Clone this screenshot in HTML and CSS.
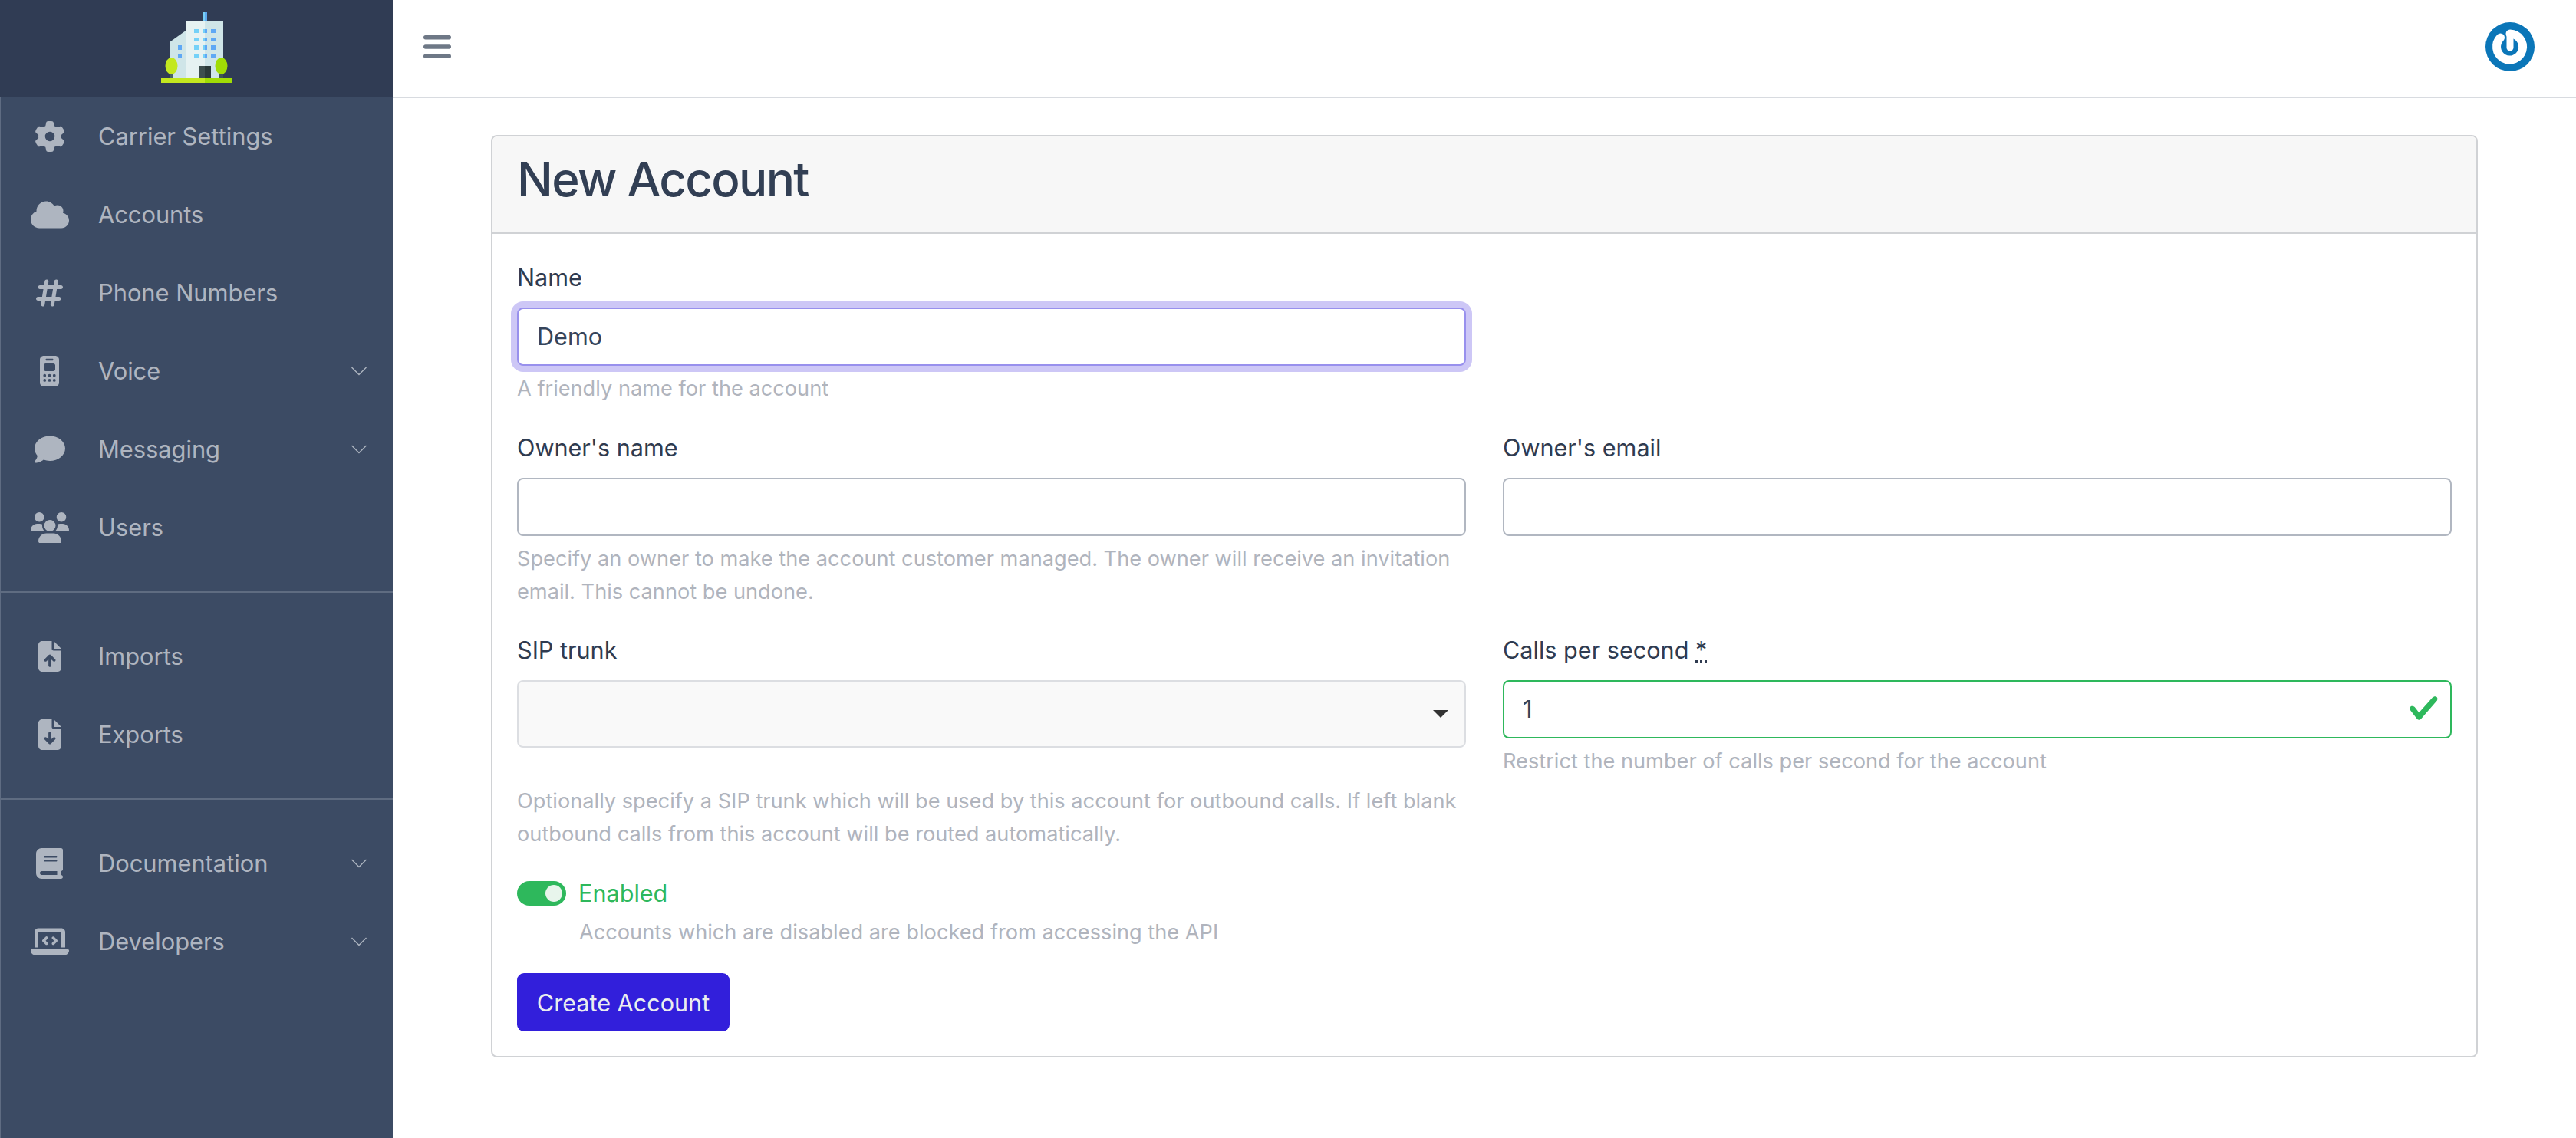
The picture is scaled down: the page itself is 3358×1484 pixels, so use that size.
FILE: index.html
```html
<!DOCTYPE html>
<html lang="en">
<head>
<meta charset="utf-8">
<title>New Account</title>
<link rel="stylesheet" href="styles.css">
</head>
<body>
<div class="app">
  <aside class="sidebar">
    <div class="brand">
      <svg class="logo" width="92" height="92" viewBox="210 16 92 92">
        <rect x="264" y="16" width="3" height="12" fill="#78d0f5"/>
        <rect x="267" y="16" width="3" height="12" fill="#5ea8ee"/>
        <polygon points="221,55 242,40 242,102 221,102" fill="#cfe5e8"/>
        <rect x="242" y="27" width="25" height="75" fill="#e6f2f2"/>
        <rect x="267" y="27" width="24" height="75" fill="#cfe5e8"/>
        <g fill="#74d1f8">
          <rect x="253" y="38" width="6" height="5"/><rect x="253" y="49" width="6" height="5"/><rect x="253" y="59" width="6" height="6"/><rect x="253" y="70" width="6" height="5"/>
          <rect x="264" y="38" width="3" height="5"/><rect x="264" y="49" width="3" height="5"/><rect x="264" y="59" width="3" height="6"/><rect x="264" y="70" width="3" height="5"/>
        </g>
        <g fill="#5fa8f5">
          <rect x="267" y="38" width="3" height="5"/><rect x="267" y="49" width="3" height="5"/><rect x="267" y="59" width="3" height="6"/><rect x="267" y="70" width="3" height="5"/>
          <rect x="275" y="38" width="6" height="5"/><rect x="275" y="49" width="6" height="5"/><rect x="275" y="59" width="6" height="6"/><rect x="275" y="70" width="6" height="5"/>
          <rect x="232" y="59" width="5" height="6"/><rect x="232" y="70" width="5" height="5"/>
        </g>
        <rect x="259" y="86" width="8" height="16" fill="#3d4e4e"/>
        <rect x="267" y="86" width="8" height="16" fill="#2b3a3a"/>
        <rect x="221" y="94" width="5" height="8" fill="#4c6468"/>
        <rect x="286" y="94" width="5" height="8" fill="#3d5256"/>
        <ellipse cx="223.5" cy="86" rx="8" ry="11" fill="#c3e81f"/>
        <ellipse cx="288.5" cy="86" rx="8" ry="11" fill="#a0dc05"/>
        <rect x="210" y="102" width="57" height="6" fill="#c3e81f"/>
        <rect x="267" y="102" width="35" height="6" fill="#a0dc05"/>
      </svg>
    </div>
    <nav class="nav">
      <ul class="nav-group">
        <li class="nav-item">
          <span class="nav-icon"><svg viewBox="0 0 512 512" class="ic"><path d="M495.9 166.6c3.2 8.700 .5 18.400-6.400 24.600l-43.300 39.400c1.100 8.300 1.700 16.800 1.700 25.400s-.6 17.100-1.700 25.400l43.300 39.400c6.900 6.200 9.600 15.900 6.400 24.600c-4.400 11.900-9.700 23.300-15.800 34.300l-4.700 8.100c-6.600 11-14 21.400-22.100 31.200c-5.900 7.200-15.700 9.600-24.500 6.800l-55.700-17.700c-13.400 10.300-28.200 18.900-44 25.400l-12.500 57.100c-2 9.100-9 16.300-18.200 17.800c-13.800 2.300-28 3.500-42.500 3.500s-28.700-1.200-42.500-3.500c-9.200-1.500-16.200-8.700-18.200-17.800l-12.500-57.100c-15.800-6.500-30.600-15.100-44-25.400L83.100 425.900c-8.800 2.800-18.600 .3-24.500-6.800c-8.100-9.800-15.500-20.200-22.100-31.200l-4.700-8.100c-6.100-11-11.400-22.400-15.800-34.300c-3.200-8.700-.5-18.400 6.400-24.600l43.300-39.400C64.600 273.100 64 264.600 64 256s.6-17.100 1.700-25.400L22.400 191.200c-6.900-6.200-9.600-15.900-6.400-24.600c4.400-11.900 9.700-23.300 15.800-34.300l4.700-8.100c6.600-11 14-21.400 22.100-31.200c5.900-7.200 15.700-9.600 24.500-6.800l55.700 17.700c13.400-10.300 28.200-18.900 44-25.400l12.500-57.100c2-9.100 9-16.300 18.200-17.800C227.300 1.200 241.500 0 256 0s28.700 1.200 42.500 3.500c9.200 1.500 16.200 8.700 18.200 17.800l12.500 57.100c15.800 6.500 30.600 15.100 44 25.400l55.700-17.700c8.800-2.800 18.600-.3 24.500 6.800c8.100 9.800 15.500 20.200 22.100 31.200l4.700 8.100c6.100 11 11.400 22.400 15.800 34.300zM256 336a80 80 0 1 0 0-160 80 80 0 1 0 0 160z"/></svg></span>
          <span class="nav-label">Carrier Settings</span>
        </li>
        <li class="nav-item">
          <span class="nav-icon"><svg viewBox="0 0 640 512" class="ic"><path d="M0 336c0 79.500 64.500 144 144 144H512c70.700 0 128-57.300 128-128c0-61.900-44-113.600-102.400-125.400c4.100-10.700 6.400-22.400 6.400-34.600c0-53-43-96-96-96c-19.700 0-38.100 6-53.300 16.200C367 64.200 315.300 32 256 32C167.600 32 96 103.600 96 192c0 2.700 .1 5.400 .2 8.100C40.200 219.800 0 273.200 0 336z"/></svg></span>
          <span class="nav-label">Accounts</span>
        </li>
        <li class="nav-item">
          <span class="nav-icon"><svg viewBox="0 0 448 512" class="ic"><path d="M181.300 32.400c17.400 2.900 29.200 19.400 26.300 36.800L197.800 128h95.100l11.500-69.300c2.900-17.400 19.400-29.200 36.800-26.300s29.200 19.400 26.300 36.800L357.800 128H416c17.700 0 32 14.300 32 32s-14.300 32-32 32H347.100L325.800 320H384c17.700 0 32 14.300 32 32s-14.300 32-32 32H315.100l-11.500 69.300c-2.900 17.400-19.400 29.200-36.800 26.300s-29.200-19.400-26.300-36.800l9.800-58.700H155.100l-11.500 69.300c-2.900 17.400-19.400 29.200-36.800 26.300s-29.200-19.400-26.300-36.800L90.200 384H32c-17.700 0-32-14.300-32-32s14.300-32 32-32h68.900l21.300-128H64c-17.700 0-32-14.300-32-32s14.300-32 32-32h68.900l11.500-69.300c2.900-17.400 19.400-29.200 36.800-26.300zM187.100 192L165.800 320h95.100l21.300-128H187.100z"/></svg></span>
          <span class="nav-label">Phone Numbers</span>
        </li>
        <li class="nav-item">
          <span class="nav-icon"><svg viewBox="0 0 320 512" class="ic"><path d="M0 64C0 28.700 28.700 0 64 0H256c35.300 0 64 28.700 64 64V448c0 35.300-28.700 64-64 64H64c-35.300 0-64-28.700-64-64V64zm64 96v64c0 17.700 14.300 32 32 32H224c17.700 0 32-14.300 32-32V160c0-17.700-14.300-32-32-32H96c-17.700 0-32 14.300-32 32zM80 352a24 24 0 1 0 0-48 24 24 0 1 0 0 48zm24 56a24 24 0 1 0 -48 0 24 24 0 1 0 48 0zm56-56a24 24 0 1 0 0-48 24 24 0 1 0 0 48zm24 56a24 24 0 1 0 -48 0 24 24 0 1 0 48 0zm56-56a24 24 0 1 0 0-48 24 24 0 1 0 0 48zm24 56a24 24 0 1 0 -48 0 24 24 0 1 0 48 0zM112 48c-8.800 0-16 7.200-16 16s7.200 16 16 16h96c8.800 0 16-7.200 16-16s-7.200-16-16-16H112z"/></svg></span>
          <span class="nav-label">Voice</span>
          <svg class="chev" viewBox="0 0 20 12"><path d="M0.5 1l9.500 9.500L19.500 1"/></svg>
        </li>
        <li class="nav-item">
          <span class="nav-icon"><svg viewBox="0 0 512 512" class="ic"><path d="M512 240c0 114.900-114.600 208-256 208c-37.100 0-72.300-6.400-104.100-17.900c-11.900 8.700-31.300 20.600-54.300 30.600C73.600 471.100 44.700 480 16 480c-6.500 0-12.300-3.900-14.800-9.900c-2.500-6-1.100-12.800 3.400-17.400l.3-.3c.3-.3 .7-.7 1.300-1.400c1.100-1.200 2.800-3.100 4.900-5.700c4.100-5 9.600-12.400 15.200-21.600c10-16.600 19.500-38.400 21.400-62.900C17.700 326.800 0 285.100 0 240C0 125.100 114.600 32 256 32s256 93.100 256 208z"/></svg></span>
          <span class="nav-label">Messaging</span>
          <svg class="chev" viewBox="0 0 20 12"><path d="M0.5 1l9.500 9.500L19.500 1"/></svg>
        </li>
        <li class="nav-item">
          <span class="nav-icon"><svg viewBox="0 0 640 512" class="ic"><path d="M144 0a80 80 0 1 1 0 160A80 80 0 1 1 144 0zM512 0a80 80 0 1 1 0 160A80 80 0 1 1 512 0zM0 298.700C0 239.800 47.800 192 106.700 192h42.700c15.900 0 31 3.500 44.600 9.700c-1.300 7.200-1.900 14.700-1.900 22.300c0 38.200 16.800 72.500 43.300 96c-.2 0-.4 0-.7 0H21.300C9.600 320 0 310.400 0 298.700zM405.300 320c-.2 0-.4 0-.7 0c26.600-23.500 43.300-57.800 43.300-96c0-7.600-.7-15-1.900-22.300c13.600-6.300 28.700-9.700 44.600-9.700h42.700C592.200 192 640 239.800 640 298.700c0 11.800-9.600 21.300-21.300 21.300H405.300zM224 224a96 96 0 1 1 192 0 96 96 0 1 1 -192 0zM128 485.300C128 411.700 187.700 352 261.300 352H378.700C452.300 352 512 411.700 512 485.300c0 14.700-11.900 26.700-26.700 26.700H154.700c-14.700 0-26.700-11.900-26.700-26.700z"/></svg></span>
          <span class="nav-label">Users</span>
        </li>
      </ul>
      <ul class="nav-group">
        <li class="nav-item">
          <span class="nav-icon"><svg viewBox="0 0 384 512" class="ic"><path d="M64 0C28.700 0 0 28.700 0 64V448c0 35.300 28.700 64 64 64H320c35.300 0 64-28.700 64-64V160H256c-17.700 0-32-14.300-32-32V0H64zM256 0V128H384L256 0zM216 408c0 13.300-10.700 24-24 24s-24-10.700-24-24V305.900l-31 31c-9.400 9.400-24.600 9.400-33.900 0s-9.400-24.600 0-33.900l72-72c9.400-9.400 24.600-9.400 33.900 0l72 72c9.400 9.400 9.400 24.600 0 33.900s-24.600 9.400-33.900 0l-31-31V408z"/></svg></span>
          <span class="nav-label">Imports</span>
        </li>
        <li class="nav-item">
          <span class="nav-icon"><svg viewBox="0 0 384 512" class="ic"><path d="M64 0C28.700 0 0 28.700 0 64V448c0 35.300 28.700 64 64 64H320c35.300 0 64-28.700 64-64V160H256c-17.700 0-32-14.300-32-32V0H64zM256 0V128H384L256 0zM216 232V334.100l31-31c9.400-9.400 24.600-9.400 33.900 0s9.400 24.600 0 33.900l-72 72c-9.400 9.400-24.600 9.400-33.900 0l-72-72c-9.400-9.400-9.400-24.600 0-33.900s24.600-9.400 33.900 0l31 31V232c0-13.300 10.700-24 24-24s24 10.700 24 24z"/></svg></span>
          <span class="nav-label">Exports</span>
        </li>
      </ul>
      <ul class="nav-group">
        <li class="nav-item">
          <span class="nav-icon"><svg viewBox="0 0 448 512" class="ic"><path d="M96 0C43 0 0 43 0 96V416c0 53 43 96 96 96H384h32c17.700 0 32-14.300 32-32s-14.300-32-32-32V384c17.700 0 32-14.300 32-32V32c0-17.700-14.300-32-32-32H384 96zm0 384H352v64H96c-17.700 0-32-14.300-32-32s14.300-32 32-32zm32-240c0-8.800 7.200-16 16-16H336c8.800 0 16 7.200 16 16s-7.200 16-16 16H144c-8.800 0-16-7.200-16-16zm16 48H336c8.800 0 16 7.200 16 16s-7.200 16-16 16H144c-8.800 0-16-7.200-16-16s7.200-16 16-16z"/></svg></span>
          <span class="nav-label">Documentation</span>
          <svg class="chev" viewBox="0 0 20 12"><path d="M0.5 1l9.500 9.500L19.500 1"/></svg>
        </li>
        <li class="nav-item">
          <span class="nav-icon"><svg viewBox="0 0 640 512" class="ic"><path d="M64 96c0-35.300 28.700-64 64-64H512c35.300 0 64 28.700 64 64V352H512V96H128V352H64V96zM0 403.200C0 392.600 8.600 384 19.200 384H620.800c10.600 0 19.200 8.600 19.200 19.200c0 42.400-34.400 76.800-76.800 76.800H76.800C34.400 480 0 445.600 0 403.200zM281 209l-31 31 31 31c9.400 9.400 9.400 24.600 0 33.900s-24.600 9.400-33.900 0l-48-48c-9.400-9.400-9.400-24.600 0-33.900l48-48c9.400-9.400 24.600-9.400 33.900 0s9.400 24.600 0 33.900zM393 175l48 48c9.400 9.400 9.400 24.600 0 33.900l-48 48c-9.400 9.400-24.600 9.400-33.900 0s-9.400-24.600 0-33.900l31-31-31-31c-9.400-9.400-9.400-24.600 0-33.900s24.600-9.400 33.900 0z"/></svg></span>
          <span class="nav-label">Developers</span>
          <svg class="chev" viewBox="0 0 20 12"><path d="M0.5 1l9.500 9.500L19.500 1"/></svg>
        </li>
      </ul>
    </nav>
  </aside>
  <div class="main">
    <header class="topbar">
      <svg class="burger" viewBox="0 0 36 30"><rect y="0" width="36" height="5.400" rx="2.700"/><rect y="12.300" width="36" height="5.400" rx="2.700"/><rect y="24.600" width="36" height="5.400" rx="2.700"/></svg>
      <svg class="avatar" viewBox="0 0 64 64">
        <circle cx="32" cy="32" r="32" fill="#0b76b8"/>
        <path d="M19.500 20A17 17 0 1 0 32 15" fill="none" stroke="#fff" stroke-width="11" stroke-linecap="round"/>
        <path d="M32 15V33" fill="none" stroke="#fff" stroke-width="9" stroke-linecap="round"/>
      </svg>
    </header>
    <main class="content">
      <form class="card">
        <div class="card-header"><h1 class="title">New Account</h1></div>
        <div class="card-body">
          <div class="grid">
            <div class="field">
              <label class="label">Name</label>
              <div class="input input-focus">Demo</div>
              <p class="help">A friendly name for the account</p>
            </div>
            <div class="field"></div>
            <div class="field field-owner">
              <label class="label">Owner's name</label>
              <div class="input"></div>
              <p class="help">Specify an owner to make the account customer managed. The owner will receive an invitation email. This cannot be undone.</p>
            </div>
            <div class="field field-owner">
              <label class="label">Owner's email</label>
              <div class="input"></div>
            </div>
            <div class="field field-sip">
              <label class="label">SIP trunk</label>
              <div class="select"><span class="caret"></span></div>
              <p class="help help-sip">Optionally specify a SIP trunk which will be used by this account for outbound calls. If left blank outbound calls from this account will be routed automatically.</p>
            </div>
            <div class="field field-sip">
              <label class="label">Calls per second <abbr class="req">*</abbr></label>
              <div class="input input-valid">1
                <svg class="valid-icon" viewBox="0 0 8 8"><path d="M2.300 6.730L.6 4.530c-.4-1.040.46-1.400 1.100-.8l1.100 1.400 3.400-3.800c.6-.63 1.600-.27 1.200.7l-4 4.600c-.43.5-.8.4-1.100.1z"/></svg>
              </div>
              <p class="help">Restrict the number of calls per second for the account</p>
            </div>
          </div>
          <div class="switch-row">
            <span class="switch"><span class="knob"></span></span>
            <span class="switch-label">Enabled</span>
          </div>
          <p class="help help-switch">Accounts which are disabled are blocked from accessing the API</p>
          <button class="btn" type="button">Create Account</button>
        </div>
      </form>
    </main>
  </div>
</div>
</body>
</html>
```
FILE: styles.css
```css
* { box-sizing: border-box; }
html, body { margin: 0; height: 100%; }
body {
  font-family: Inter, "Liberation Sans", sans-serif;
  font-size: 30.6px;
  line-height: 45px;
  color: #3c4b64;
  background: #fff;
}
.app { display: flex; min-height: 1484px; }

.sidebar {
  width: 512px;
  flex: none;
  background: #3c4b64;
  border-left: 1px solid #5f6c82;
}
.brand {
  height: 126px;
  margin-left: -1px;
  background: #303c54;
  padding-top: 16px;
  display: flex;
  justify-content: center;
}
.logo { display: block; }
.nav { display: block; }
.nav-group {
  list-style: none;
  margin: 0;
  padding: 1px 0 32px;
  border-bottom: 2px solid #5f6c81;
}
.nav-group + .nav-group { padding-top: 32px; }
.nav-group:last-child { border-bottom: 0; }
.nav-item {
  height: 102px;
  display: flex;
  align-items: center;
  color: rgba(255, 255, 255, .6);
  font-size: 30.8px;
}
.nav-icon {
  width: 127px;
  flex: none;
  display: flex;
  justify-content: center;
}
.nav-icon svg { display: block; fill: #aeb5c0; }
.ic { height: 40px; }
.nav-label { flex: 1; padding-bottom: 2px; }
.chev {
  width: 20px;
  height: 12px;
  margin-right: 34px;
  fill: none;
  stroke: #aeb5c0;
  stroke-width: 1.4;
}

.main { flex: 1; min-width: 0; display: flex; flex-direction: column; }
.topbar {
  height: 128px;
  border-bottom: 2px solid #d8dbe0;
  display: flex;
  align-items: center;
  justify-content: space-between;
  padding: 0 54px 4px 40px;
}
.burger { width: 36px; height: 30px; fill: #6e7886; display: block; }
.avatar { width: 64px; height: 64px; display: block; }

.content { padding: 48px 128px; }
.card {
  display: block;
  border: 2px solid #d0d2d5;
  border-radius: 8px;
  background: #fff;
}
.card-header {
  height: 127px;
  background: #f7f7f7;
  border-bottom: 2px solid #d0d2d5;
  border-radius: 6px 6px 0 0;
  padding: 20px 32px 0;
  display: flex;
  align-items: flex-start;
}
.title {
  margin: 0;
  font-size: 62px;
  line-height: 72px;
  font-weight: 500;
  letter-spacing: -1.7px;
  color: #323f54;
}
.card-body { padding: 34px 32px 32px; }
.grid {
  display: grid;
  grid-template-columns: 1fr 1fr;
  column-gap: 48px;
}
.field { min-width: 0; }
.label {
  display: block;
  height: 45px;
  margin-bottom: 17px;
  color: #2f3b50;
}
.input, .select {
  position: relative;
  height: 76px;
  border: 2px solid #b1b7c1;
  border-radius: 8px;
  background: #fff;
  padding: 0 24px;
  line-height: 72px;
  color: #36445a;
}
.input-focus {
  border-color: #9890ed;
  box-shadow: 0 0 0 8px #cdc7f6;
}
.input-valid { border-color: #2eb85c; }
.valid-icon {
  position: absolute;
  right: 14px;
  top: 14px;
  width: 41px;
  height: 41px;
  fill: #2eb85c;
}
.select {
  height: 88px;
  background: #f9f9f9;
  border-color: #dcdee2;
}
.caret {
  position: absolute;
  right: 21px;
  top: 37px;
  border: 10px solid transparent;
  border-top-color: #333;
  border-bottom: 0;
}
.help {
  margin: 8px 0 0;
  font-size: 27.2px;
  line-height: 43px;
  color: #b0b4bd;
}
.field-owner { margin-top: 33px; }
.field-sip { margin-top: 32px; }
.help-sip { margin-top: 48px; }
.req {
  text-decoration: underline dotted;
}
.switch-row {
  margin-top: 33px;
  display: flex;
  align-items: center;
  height: 45px;
  gap: 16px;
}
.switch {
  width: 64px;
  height: 32px;
  border-radius: 16px;
  background: #2eb85c;
  position: relative;
  flex: none;
}
.knob {
  position: absolute;
  right: 5px;
  top: 5px;
  width: 22px;
  height: 22px;
  border-radius: 50%;
  background: #e8f5ec;
}
.switch-label { color: #2eb85c; }
.help-switch { margin: 7px 0 0 81px; }
.btn {
  display: block;
  margin-top: 32px;
  width: 277px;
  height: 76px;
  border: 0;
  border-radius: 9px;
  background: #321fdb;
  color: #ebedef;
  font: inherit;
  padding: 0;
}
```
